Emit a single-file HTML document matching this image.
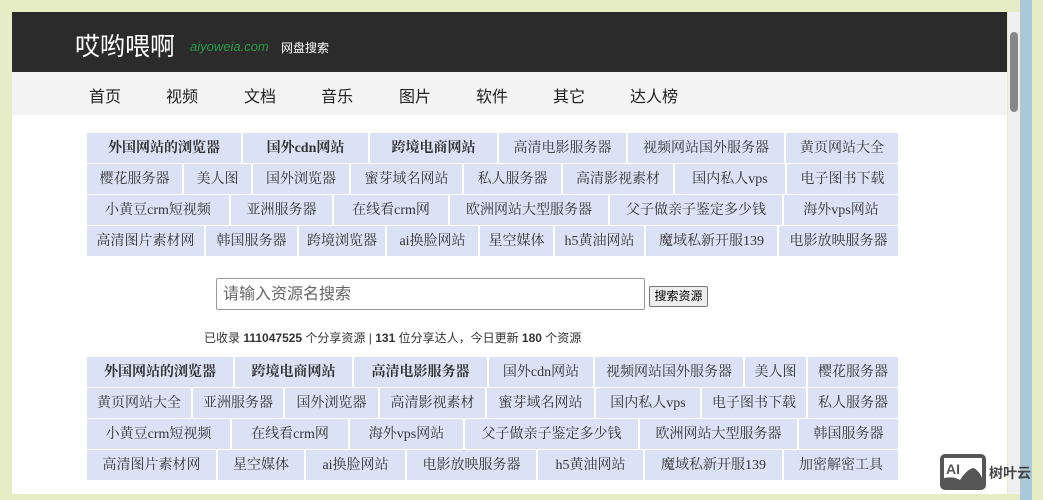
<!DOCTYPE html>
<html><head><meta charset="utf-8"><style>
body{margin:0;width:1043px;height:500px;overflow:hidden;background:#e6ecc4;font-family:"Liberation Sans","Noto Sans CJK SC",sans-serif;position:relative}
.page{position:absolute;left:12px;top:12px;width:995px;height:482px;background:#fff}
.hd{position:absolute;left:0;top:0;width:995px;height:60px;background:#2b2b2b}
.nav{position:absolute;left:0;top:60px;width:995px;height:43px;background:#f3f3f3}
.nav span{position:absolute;top:11px;font-size:16px;color:#222}
.grid{position:absolute;left:87px;width:811px}
.row{display:flex;height:31px;margin-bottom:0}
.row div{background:#dce2f5;margin-right:2px;margin-bottom:1px;height:30px;line-height:31px;text-align:center;font-family:"Liberation Serif","Noto Serif CJK SC",serif;font-size:14px;color:#333;white-space:nowrap;overflow:hidden}
.row div:last-child{margin-right:0;flex:1}
.b div{font-weight:bold}
</style></head><body>
<div class="page">
<div class="hd">
<span style="position:absolute;left:63px;top:15px;font-size:25px;color:#fff">哎哟喂啊</span>
<span style="position:absolute;left:178px;top:27px;font-size:13px;color:#2a9a4a;font-style:italic">aiyoweia.com</span>
<span style="position:absolute;left:269px;top:27px;font-size:12px;color:#fff">网盘搜索</span>
</div>
<div class="nav">
<span style="left:77px">首页</span><span style="left:154px">视频</span><span style="left:232px">文档</span><span style="left:309px">音乐</span><span style="left:387px">图片</span><span style="left:464px">软件</span><span style="left:541px">其它</span><span style="left:618px">达人榜</span>
</div>
</div>
<div class="grid" style="top:133px">
<div class="row b"><div style="width:154px">外国网站的浏览器</div><div style="width:125px">国外cdn网站</div><div style="width:127px">跨境电商网站</div><div style="width:127px;font-weight:normal">高清电影服务器</div><div style="width:156px;font-weight:normal">视频网站国外服务器</div><div style="font-weight:normal">黄页网站大全</div></div>
<div class="row"><div style="width:95px">樱花服务器</div><div style="width:67px">美人图</div><div style="width:96px">国外浏览器</div><div style="width:111px">蜜芽域名网站</div><div style="width:97px">私人服务器</div><div style="width:110px">高清影视素材</div><div style="width:110px">国内私人vps</div><div>电子图书下载</div></div>
<div class="row"><div style="width:142px">小黄豆crm短视频</div><div style="width:101px">亚洲服务器</div><div style="width:114px">在线看crm网</div><div style="width:158px">欧洲网站大型服务器</div><div style="width:172px">父子做亲子鉴定多少钱</div><div>海外vps网站</div></div>
<div class="row"><div style="width:117px">高清图片素材网</div><div style="width:91px">韩国服务器</div><div style="width:86px">跨境浏览器</div><div style="width:91px">ai换脸网站</div><div style="width:73px">星空媒体</div><div style="width:89px">h5黄油网站</div><div style="width:131px">魔域私新开服139</div><div>电影放映服务器</div></div>
</div>
<div style="position:absolute;left:216px;top:278px;width:429px;height:32px;border:1px solid #999;border-radius:2px;background:#fff;font-size:16px;color:#666;line-height:32px;padding-left:6px;box-sizing:border-box">请输入资源名搜索</div>
<div style="position:absolute;left:649px;top:286px;width:57px;height:19px;border:1px solid #777;border-radius:2px;background:#eee;font-size:12px;line-height:19px;text-align:center;color:#000">搜索资源</div>
<div style="position:absolute;left:204px;top:329px;font-size:12px;color:#333">已收录 <b>111047525</b> 个分享资源 | <b>131</b> 位分享达人，今日更新 <b>180</b> 个资源</div>
<div class="grid" style="top:357px">
<div class="row b"><div style="width:146px">外国网站的浏览器</div><div style="width:117px">跨境电商网站</div><div style="width:133px">高清电影服务器</div><div style="width:104px;font-weight:normal">国外cdn网站</div><div style="width:148px;font-weight:normal">视频网站国外服务器</div><div style="width:61px;font-weight:normal">美人图</div><div style="font-weight:normal">樱花服务器</div></div>
<div class="row"><div style="width:104px">黄页网站大全</div><div style="width:90px">亚洲服务器</div><div style="width:93px">国外浏览器</div><div style="width:105px">高清影视素材</div><div style="width:107px">蜜芽域名网站</div><div style="width:104px">国内私人vps</div><div style="width:104px">电子图书下载</div><div>私人服务器</div></div>
<div class="row"><div style="width:143px">小黄豆crm短视频</div><div style="width:116px">在线看crm网</div><div style="width:113px">海外vps网站</div><div style="width:173px">父子做亲子鉴定多少钱</div><div style="width:157px">欧洲网站大型服务器</div><div>韩国服务器</div></div>
<div class="row"><div style="width:129px">高清图片素材网</div><div style="width:86px">星空媒体</div><div style="width:99px">ai换脸网站</div><div style="width:129px">电影放映服务器</div><div style="width:105px">h5黄油网站</div><div style="width:137px">魔域私新开服139</div><div>加密解密工具</div></div>
</div>
<div style="position:absolute;left:1008px;top:12px;width:12px;height:482px;background:#f0f0f0"></div>
<div style="position:absolute;left:1010px;top:32px;width:8px;height:80px;background:#888;border-radius:4px"></div>
<div style="position:absolute;left:1020px;top:0;width:12px;height:500px;background:#a9c9d9"></div>
<svg style="position:absolute;left:940px;top:454px" width="46" height="36" viewBox="0 0 46 36"><rect x="0" y="0" width="46" height="36" rx="5" fill="#555"/><rect x="4" y="4" width="38" height="28" fill="#fff"/><path d="M4 32 L4 24 Q14 22 20 26 Q28 14 34 14 Q40 18 42 24 L42 32 Z" fill="#555"/><text x="6" y="20" font-size="14" font-weight="bold" fill="#555" font-family="Liberation Sans">AI</text></svg>
<div style="position:absolute;left:989px;top:463px;font-size:14px;font-weight:bold;color:#444">树叶云</div>
</body></html>
